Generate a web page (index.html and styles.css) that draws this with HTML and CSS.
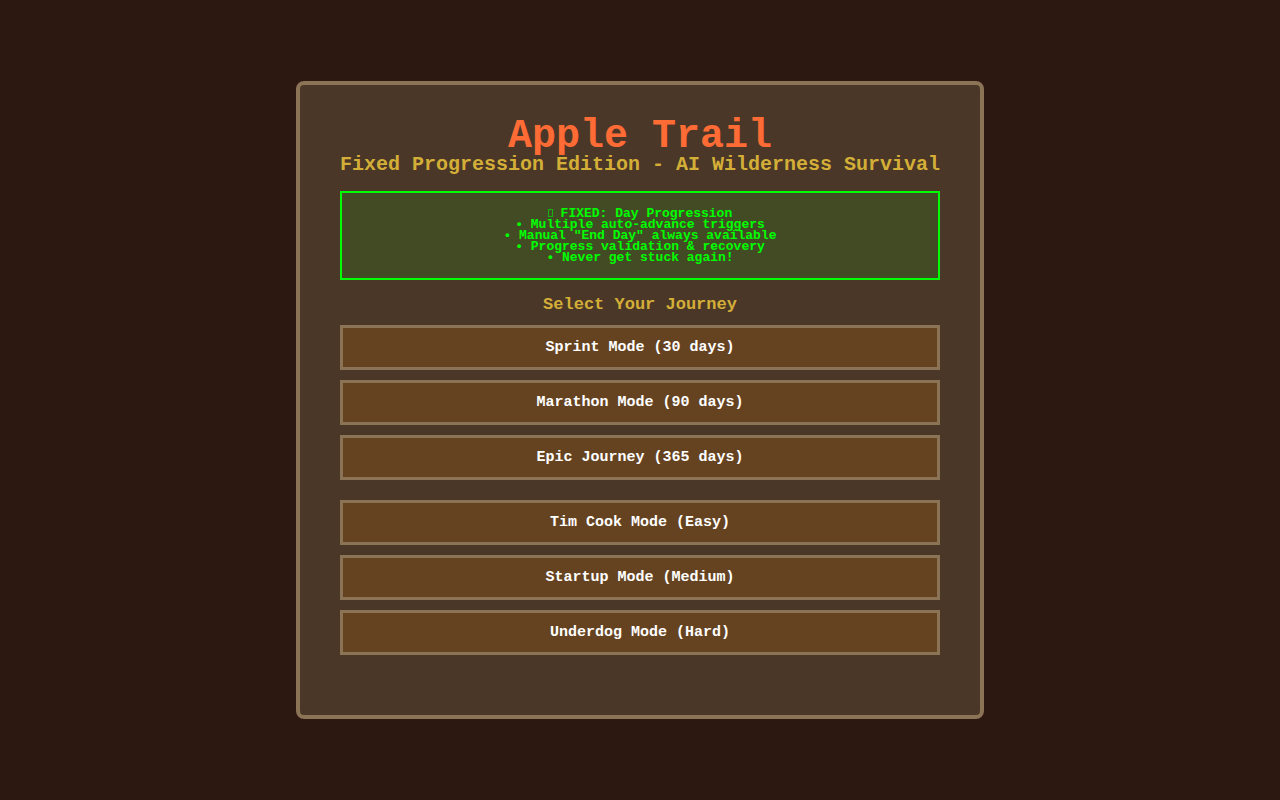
FILE: index.html
```html
<!DOCTYPE html>
<html lang="en">
<head>
  <meta charset="UTF-8">
  <meta name="viewport" content="width=device-width, initial-scale=1.0">
  <title>Apple Trail</title>
  <link rel="stylesheet" href="styles.css">
</head>
<body>

  <main class="screen">
    <h1 class="title">Apple Trail</h1>
    <p class="subtitle">Fixed Progression Edition - AI Wilderness Survival</p>

    <div class="notice">
      <strong><span class="icon"></span> FIXED: Day Progression</strong><br>
      • Multiple auto-advance triggers<br>
      • Manual "End Day" always available<br>
      • Progress validation &amp; recovery<br>
      • Never get stuck again!
    </div>

    <h2 class="heading">Select Your Journey</h2>

    <!-- Journey length -->
    <div class="menu">
      <button type="button">Sprint Mode (30 days)</button>
      <button type="button">Marathon Mode (90 days)</button>
      <button type="button">Epic Journey (365 days)</button>
    </div>

    <!-- Difficulty -->
    <div class="menu">
      <button type="button">Tim Cook Mode (Easy)</button>
      <button type="button">Startup Mode (Medium)</button>
      <button type="button">Underdog Mode (Hard)</button>
    </div>
  </main>

</body>
</html>
```
FILE: styles.css
```css
* {
  box-sizing: border-box;
  margin: 0;
  padding: 0;
}

body {
  font-family: "Liberation Mono", monospace;
  font-weight: bold;
  background: #2c1810;
  color: #fff;
  min-height: 100vh;
  display: flex;
  justify-content: center;
  align-items: center;
}

.screen {
  width: 100%;
  max-width: 688px;
  padding: 36px 40px 40px;
  background: #4a3728;
  border: 4px solid #8b7355;
  border-radius: 8px;
  text-align: center;
}

.title {
  font-size: 40px;
  line-height: 32px;
  color: #ff6b35;
}

.subtitle {
  font-size: 20px;
  line-height: 24px;
  margin-bottom: 14px;
  color: #d4af37;
  white-space: nowrap;
}

.notice {
  padding: 15px;
  margin-bottom: 15px;
  border: 2px solid #00ff00;
  background: rgba(0, 255, 0, 0.1);
  color: #00ff00;
  font-size: 13px;
  line-height: 11px;
}

.icon {
  display: inline-block;
  width: 5px;
  height: 8px;
  border: 1px solid #16b213;
}

.heading {
  font-size: 17px;
  line-height: 20px;
  margin-bottom: 10px;
  color: #d4af37;
}

.menu {
  display: flex;
  flex-direction: column;
  gap: 10px;
  margin-bottom: 20px;
}

button {
  width: 100%;
  padding: 12px;
  border: 3px solid #8b7355;
  background: #654321;
  color: #fff;
  font-family: inherit;
  font-size: 15px;
  font-weight: bold;
  line-height: 15px;
  cursor: pointer;
}

button:hover {
  background: #8b7355;
}
```
